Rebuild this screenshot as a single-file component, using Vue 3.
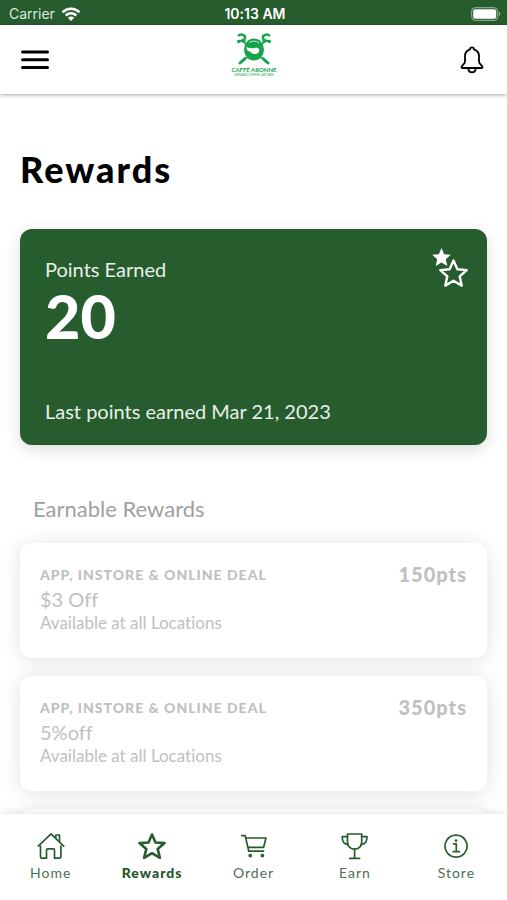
<template>
  <div class="app">
    <div class="status-bar">
      <div class="carrier">
        <span>Carrier</span>
        <svg width="20" height="14" viewBox="0 0 20 14" fill="none" stroke="#fff" stroke-width="2.6">
          <path d="M1.5 5.2C6.4 0.6 13.6 0.6 18.5 5.2" />
          <path d="M4.7 8.5C7.8 5.7 12.2 5.7 15.3 8.5" />
          <path d="M10 14l-3.1-3.3c1.8-1.5 4.4-1.5 6.2 0z" fill="#fff" stroke="none" />
        </svg>
      </div>
      <span class="clock">10:13 AM</span>
      <svg class="battery" width="30" height="14" viewBox="0 0 30 14">
        <rect x="0.7" y="0.7" width="26" height="12.6" rx="3.5" fill="none" stroke="#9db79f" />
        <rect x="2.2" y="2.2" width="23" height="9.6" rx="2" fill="#fff" />
        <path d="M28 4.8c1.6 0.6 1.6 3.8 0 4.4z" fill="#9db79f" />
      </svg>
    </div>

    <header class="header">
      <button class="icon-btn" aria-label="Menu">
        <svg width="28" height="20" viewBox="0 0 28 20" stroke="#000" stroke-width="3" stroke-linecap="round">
          <path d="M1.5 2h25M1.5 9.8h25M1.5 17.6h25" />
        </svg>
      </button>
      <svg class="logo" width="46" height="46" viewBox="0 0 46 46" role="img" aria-label="Caffé Aronne">
        <g fill="none" stroke="#16a34a">
          <path d="M11 8l24 22M35 8L11 30" stroke-width="1.6" />
          <path d="M9 31l5-4.500M37 31l-5-4.500" stroke-width="3" stroke-linecap="round" />
          <path d="M7 4c3-3 8-1 7 2.500s-4 1-6 3.500M14 5l-1 5-3-2M7 8l1 3" stroke-width="2.400" />
          <path d="M39 4c-3-3-8-1-7 2.500s4 1 6 3.500M32 5l1 5 3-2M39 8l-1 3" stroke-width="2.400" />
        </g>
        <ellipse cx="23" cy="17.500" rx="10" ry="11" fill="#16a34a" />
        <path d="M15.500 15c2.500 1.500 4 .5 6 1.500 2-.5 5.500-1.500 6.500.5 1 2.500-1 5.500-4 5-3 .5-3.500-2-5.500-2.500S15.500 18 15.500 15z" fill="#fff" />
        <path d="M18 11c2-2.500 7-2.500 10 0" fill="none" stroke="#fff" stroke-width="0.800" />
        <text x="23" y="39.500" class="logo-name">CAFFÉ ARONNE</text>
        <text x="23" y="44" class="logo-tag">ORGANIC COFFEE, ARTISAN</text>
      </svg>
      <button class="icon-btn" aria-label="Notifications">
        <svg width="24" height="28" viewBox="0 0 24 28" fill="none" stroke="#000" stroke-width="1.800" stroke-linejoin="round">
          <path d="M12 1.400c-1.400 0-2 .8-2 2C6.800 4.400 5 7 5 10.300v5.200c0 2.700-3.500 3.900-3.500 5.700 0 .5.300.8.900.8h19.200c.6 0 .9-.3.900-.8 0-1.800-3.500-3-3.500-5.700v-5.200c0-3.300-1.800-5.900-5-6.900 0-1.200-.6-2-2-2z" />
          <path d="M8.300 22.200c0 5.400 7.400 5.400 7.400 0" />
        </svg>
      </button>
    </header>

    <main class="content">
      <h1>Rewards</h1>

      <section class="points-card">
        <div>
          <p class="points-label">Points Earned</p>
          <p class="points-value">{{ points }}</p>
        </div>
        <p class="points-label">Last points earned {{ lastEarned }}</p>
        <svg class="stars" width="36" height="40" viewBox="0 0 36 40">
          <path d="M9.500 0l2.700 6.200 6.600.6-5 4.500 1.500 6.600-5.800-3.500-5.800 3.500 1.500-6.600-5-4.500 6.600-.6z" fill="#fff" />
          <path d="M21.500 12.500l3.900 8.700 9.300.9-7 6.300 2 9.200-8.200-4.800-8.200 4.800 2-9.200-7-6.300 9.300-.9z" fill="#275c2e" stroke="#fff" stroke-width="2.400" stroke-linejoin="round" />
        </svg>
      </section>

      <h2>Earnable Rewards</h2>

      <ul class="rewards">
        <li v-for="reward in rewards" :key="reward.points" class="reward">
          <div>
            <p class="reward-type">{{ reward.type }}</p>
            <p class="reward-name">{{ reward.name }}</p>
            <p class="reward-place">{{ reward.place }}</p>
          </div>
          <span class="reward-points">{{ reward.points }}pts</span>
        </li>
        <!-- still loading -->
        <li class="reward" aria-hidden="true"></li>
      </ul>
    </main>

    <nav class="tabs">
      <a v-for="tab in tabs" :key="tab.label" href="#" class="tab" :class="{ active: tab.label === current }" @click.prevent="current = tab.label">
        <svg width="28" height="28" viewBox="0 0 28 28">
          <path v-for="d in tab.paths" :key="d" :d="d" />
        </svg>
        <span>{{ tab.label }}</span>
      </a>
    </nav>
  </div>
</template>

<script setup>
import { ref } from 'vue'

const points = ref(20)
const lastEarned = ref('Mar 21, 2023')
const current = ref('Rewards')

const rewards = [
  { type: 'APP, INSTORE & ONLINE DEAL', name: '$3 Off', place: 'Available at all Locations', points: 150 },
  { type: 'APP, INSTORE & ONLINE DEAL', name: '5%off', place: 'Available at all Locations', points: 350 },
]

const tabs = [
  {
    label: 'Home',
    paths: [
      'M1.300 14.200L14 1.800l12.700 12.400',
      'M3.500 14.200v10.600q0 1.400 1.400 1.400h4.600v-8q0-1.400 1.400-1.400h5.200q1.400 0 1.400 1.400v8h5q1.400 0 1.400-1.400V14.200',
      'M18.800 5.500V3h3.700v6.200',
    ],
  },
  {
    label: 'Rewards',
    paths: ['M14 2.500l3.500 8 9 .6-6.800 5.900 2.200 8.800L14 21.200l-7.900 4.600 2.200-8.800-6.800-5.900 9-.6z'],
  },
  {
    label: 'Order',
    paths: [
      'M1.800 3.600h3.400l3.600 15.600M6 6h20l-2.400 9.300H8',
      'M8.800 19.200h14.700',
      'M10.200 22.600a1 1 0 1 0 .1 0zM22.300 22.600a1 1 0 1 0 .1 0z',
    ],
  },
  {
    label: 'Earn',
    paths: [
      'M6.500 2h14.200v8.300c0 9.200-14.200 9.200-14.200 0z',
      'M6.500 4.700H1.200c0 4.800 1.600 7.600 5.800 7.600M20.700 4.700H26c0 4.800-1.600 7.600-5.800 7.600',
      'M13.600 17.200v9M8.800 26.400h9.800',
    ],
  },
  {
    label: 'Store',
    paths: [
      'M14 3.100a11 11 0 1 0 .1 0z',
      'M11.600 11.800h2.700v7.600M11.200 19.600h6.200',
      'M14 8a.6.6 0 1 0 .1 0z',
    ],
  },
]
</script>

<style>
body {
  margin: 0;
  background: #fff;
}
</style>

<style scoped>
.app {
  display: flex;
  flex-direction: column;
  height: 100vh;
  overflow: hidden;
  font-family: Lato, sans-serif;
  font-variant-ligatures: none;
  background: #fff;
}

p, h1, h2, ul {
  margin: 0;
  padding: 0;
}

.status-bar {
  display: grid;
  grid-template-columns: 1fr auto 1fr;
  align-items: center;
  height: 25px;
  padding: 2px 6px 0 9px;
  box-sizing: border-box;
  background: #275c2e;
  color: #fff;
  font-family: Inter, sans-serif;
  font-size: 14px;
}

.carrier {
  display: flex;
  align-items: center;
  gap: 6px;
  color: #dce8dc;
}

.clock {
  font-weight: 600;
}

.battery {
  justify-self: end;
}

.header {
  position: relative;
  z-index: 1;
  display: flex;
  align-items: center;
  justify-content: space-between;
  height: 69px;
  padding: 0 21px;
  background: #fff;
  box-shadow: 0 1px 4px rgba(0, 0, 0, 0.35);
}

.icon-btn {
  display: flex;
  width: 28px;
  padding: 0;
  border: 0;
  background: none;
  justify-content: center;
}

.logo {
  margin-bottom: 10px;
}

.logo-name {
  font-family: Lato, sans-serif;
  font-size: 6px;
  font-weight: 700;
  text-anchor: middle;
  fill: #16a34a;
}

.logo-tag {
  font-family: Lato, sans-serif;
  font-size: 3px;
  text-anchor: middle;
  fill: #16a34a;
}

.content {
  flex: 1;
  min-height: 0;
  overflow: hidden;
  padding: 55px 20px 0;
}

h1 {
  font-size: 36px;
  line-height: 40px;
  font-weight: 900;
  letter-spacing: 2px;
  color: #000;
}

.points-card {
  position: relative;
  display: flex;
  flex-direction: column;
  justify-content: space-between;
  min-height: 216px;
  margin-top: 40px;
  padding: 26px 25px 20px;
  box-sizing: border-box;
  border-radius: 12px;
  background: #275c2e;
  color: #fff;
  box-shadow: 0 4px 16px rgba(0, 0, 0, 0.14);
}

.points-label {
  font-size: 20px;
  line-height: 28px;
  color: #e8f0e8;
}

.points-value {
  font-size: 61px;
  line-height: 66px;
  font-weight: 900;
}

.stars {
  position: absolute;
  top: 19px;
  right: 19px;
}

h2 {
  margin: 50px 13px 20px;
  font-size: 22px;
  line-height: 28px;
  font-weight: 400;
  color: #a0a0a0;
}

.rewards {
  display: flex;
  flex-direction: column;
  gap: 18px;
  list-style: none;
}

.reward {
  display: flex;
  justify-content: space-between;
  min-height: 115px;
  padding: 20px;
  box-sizing: border-box;
  border-radius: 12px;
  background: #fff;
  color: #c0c0c0;
  box-shadow: 0 2px 20px rgba(0, 0, 0, 0.12);
}

.reward-type {
  font-size: 14px;
  line-height: 24px;
  font-weight: 900;
  letter-spacing: 1px;
}

.reward-name {
  font-size: 20px;
  line-height: 24px;
}

.reward-place {
  font-size: 17px;
  line-height: 24px;
}

.reward-points {
  font-size: 20px;
  line-height: 22px;
  font-weight: 900;
  letter-spacing: 1px;
}

.tabs {
  position: relative;
  display: flex;
  height: 86px;
  background: #fff;
  box-shadow: 0 -1px 8px rgba(0, 0, 0, 0.1);
}

.tab {
  flex: 1;
  display: flex;
  flex-direction: column;
  align-items: center;
  padding-top: 18px;
  gap: 4px;
  font-size: 14px;
  line-height: 18px;
  letter-spacing: 1px;
  color: #4c7052;
  text-decoration: none;
}

.tab svg {
  fill: none;
  stroke: #275c2e;
  stroke-width: 1.7;
  stroke-linecap: round;
  stroke-linejoin: round;
}

.tab.active {
  color: #1f5527;
  font-weight: 900;
}

.tab.active svg {
  stroke-width: 2.6;
}
</style>
